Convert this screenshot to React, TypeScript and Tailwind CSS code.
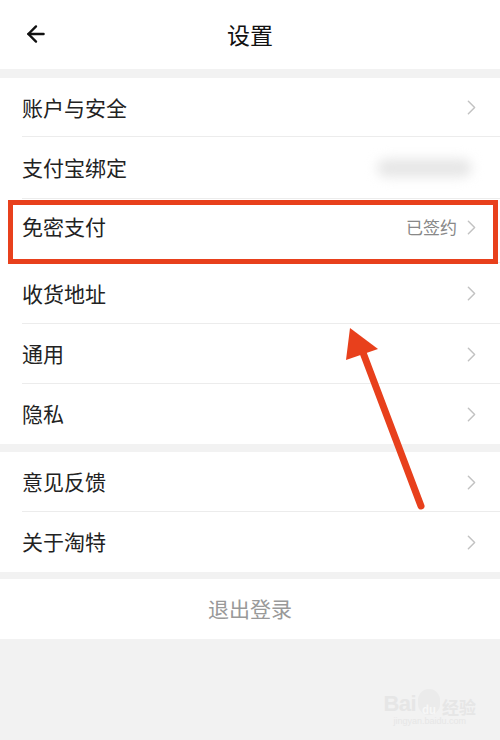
import { ArrowLeft, ChevronRight } from 'lucide-react';

type Row = { label: string; value?: string; blur?: boolean; mark?: boolean; h: string };

const groupOne: Row[] = [
  { label: '账户与安全', h: 'h-[59px]' },
  { label: '支付宝绑定', blur: true, h: 'h-[62px]' },
  { label: '免密支付', value: '已签约', mark: true, h: 'h-[64px]' },
  { label: '收货地址', h: 'h-[61px]' },
  { label: '通用', h: 'h-[60px]' },
  { label: '隐私', h: 'h-[60px]' },
];

const groupTwo: Row[] = [
  { label: '意见反馈', h: 'h-[60px]' },
  { label: '关于淘特', h: 'h-[60px]' },
];

function SettingRow({ row, last }: { row: Row; last: boolean }) {
  return (
    <div className={`relative flex items-center pl-[22px] pr-[16px] ${row.h}`}>
      <span className={`flex-1 text-[21px] text-[#222] ${row.mark ? '-mt-[8px]' : ''}`}>{row.label}</span>
      {row.value && <span className={`mr-0.5 text-[17px] text-[#888] ${row.mark ? '-mt-[8px]' : ''}`}>{row.value}</span>}
      {row.blur ? (
        <div className="mr-[12px] h-[18px] w-[95px] rounded-full bg-[#e6e6e6] blur-[6px]" />
      ) : (
        <ChevronRight size={25} strokeWidth={1.4} className={`text-[#c2c2c2] ${row.mark ? '-mt-[8px]' : ''}`} />
      )}
      {!last && <div className="absolute bottom-0 left-[22px] right-0 h-px bg-[#ececec]" />}
      {row.mark && (
        <div className="pointer-events-none absolute left-[8px] right-[2px] top-[1px] bottom-[-1px] border-[5px] border-[#e8401c]" />
      )}
    </div>
  );
}

export default function App() {
  return (
    <div
      className="relative h-[740px] w-[500px] overflow-hidden bg-[#f2f2f2]"
      style={{ fontFamily: '"Noto Sans CJK SC", "Noto Sans", sans-serif' }}
    >
      <header className="relative flex h-[69px] items-center justify-center bg-white">
        <ArrowLeft size={26} strokeWidth={2.2} className="absolute left-[23px] top-[21px] text-[#111]" />
        <h1 className="text-[23px] text-[#111]">设置</h1>
      </header>

      <section className="mt-[9px] bg-white">
        {groupOne.map((r, i) => (
          <SettingRow key={r.label} row={r} last={i === groupOne.length - 1} />
        ))}
      </section>

      <section className="mt-[8px] bg-white">
        {groupTwo.map((r, i) => (
          <SettingRow key={r.label} row={r} last={i === groupTwo.length - 1} />
        ))}
      </section>

      <div className="mt-[7px] flex h-[60px] items-center justify-center bg-white text-[21px] text-[#999]">
        退出登录
      </div>

      {/* annotation arrow over the list */}
      <svg className="pointer-events-none absolute left-0 top-0" width="500" height="740">
        <line x1="421" y1="506" x2="362" y2="350" stroke="#e8401c" strokeWidth="7" strokeLinecap="round" />
        <polygon points="350,328 346,360 378,349" fill="#e8401c" />
      </svg>

      {/* watermark */}
      <div className="pointer-events-none absolute right-[24px] bottom-[14px] flex flex-col items-center text-[#e6e6e6]">
        <div className="flex items-end gap-0.5">
          <span className="text-[22px] font-bold leading-none tracking-tight" style={{ fontFamily: '"Liberation Sans", sans-serif' }}>
            Bai
          </span>
          <span className="flex h-[26px] w-[22px] items-end justify-center rounded-full bg-[#ebebeb] text-[11px] font-bold leading-none text-[#f7f7f7]">
            du
          </span>
          <span className="text-[17px] font-bold leading-none">经验</span>
        </div>
        <span className="mt-0.5 text-[9px] leading-none" style={{ fontFamily: '"Liberation Sans", sans-serif' }}>
          jingyan.baidu.com
        </span>
      </div>
    </div>
  );
}
